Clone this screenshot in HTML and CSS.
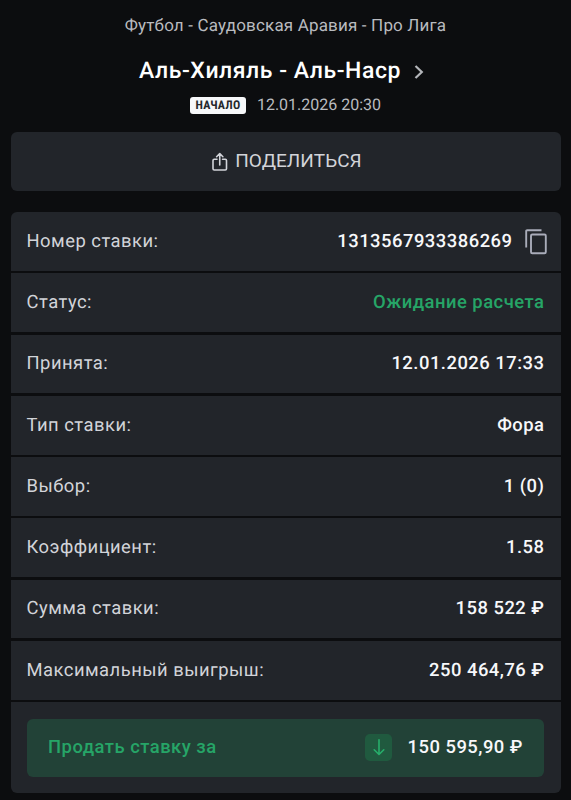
FILE: index.html
```html
<!DOCTYPE html>
<html lang="ru">
<head>
<meta charset="utf-8">
<title>Ставка</title>
<link rel="stylesheet" href="styles.css">
</head>
<body>
<header class="header">
  <div class="league">Футбол - Саудовская Аравия - Про Лига</div>
  <div class="match">
    <span class="match-name">Аль-Хиляль - Аль-Наср</span>
    <svg class="chevron" width="10" height="16" viewBox="0 0 10 16"><path d="M1.5 2 L7.8 8 L1.5 14"/></svg>
  </div>
  <div class="start"><span class="badge">НАЧАЛО</span><span class="date">12.01.2026 20:30</span></div>
</header>
<button class="share">
  <svg class="share-icon" width="16" height="20" viewBox="0 0 16 20"><path d="M5 7.3H2.2Q1 7.3 1 8.5V16.8Q1 18 2.2 18H13.3Q14.5 18 14.5 16.8V8.500Q14.500 7.300 13.300 7.300H10.500M7.750 13V1.800M4.600 4.700L7.750 1.500L10.900 4.700"/></svg>
  <span class="share-text">ПОДЕЛИТЬСЯ</span>
</button>
<main class="card">
  <div class="row"><span class="label">Номер ставки:</span><span class="value">1313567933386269</span><svg class="copy" width="22" height="26" viewBox="0 0 22 26"><path d="M1.200 18.500V2.200Q1.200 1.200 2.200 1.200H16.500"/><rect x="6" y="5.500" width="14.800" height="18.800" rx="1.300"/></svg></div>
  <div class="row"><span class="label">Статус:</span><span class="value pending">Ожидание расчета</span></div>
  <div class="row"><span class="label">Принята:</span><span class="value">12.01.2026 17:33</span></div>
  <div class="row"><span class="label">Тип ставки:</span><span class="value">Фора</span></div>
  <div class="row"><span class="label">Выбор:</span><span class="value">1 (0)</span></div>
  <div class="row"><span class="label">Коэффициент:</span><span class="value">1.58</span></div>
  <div class="row"><span class="label">Сумма ставки:</span><span class="value">158 522 ₽</span></div>
  <div class="row"><span class="label">Максимальный выигрыш:</span><span class="value">250 464,76 ₽</span></div>
  <div class="sell-wrap">
    <button class="sell">
      <span class="sell-label">Продать ставку за</span>
      <span class="trend"><svg width="12" height="17" viewBox="0 0 12 17"><path d="M6 .8V15.200M1.200 10.800L6 15.500L10.800 10.800"/></svg></span>
      <span class="value">150 595,90 ₽</span>
    </button>
  </div>
</main>
</body>
</html>
```

FILE: styles.css
```css
* { box-sizing: border-box; }
body {
  margin: 0;
  height: 800px;
  overflow: hidden;
  padding: 0 10.500px;
  background: #0c0d0f;
  font-family: Roboto, "Liberation Sans", sans-serif;
  text-rendering: geometricPrecision;
  color: #d2d4d9;
}
svg { fill: none; flex: none; stroke-linecap: round; stroke-linejoin: round; }
button { border: 0; font: inherit; color: inherit; width: 100%; display: flex; align-items: center; }
.header { height: 132px; padding-top: 14px; display: flex; flex-direction: column; align-items: center; }
.league { font-size: 17px; line-height: 24px; letter-spacing: .17px; color: #b9bbbf; }
.match { display: flex; align-items: center; gap: 13px; margin: 17px 8px 0 0; height: 32px; }
.match-name { font-size: 23px; line-height: 32px; font-weight: 500; letter-spacing: .54px; color: #fff; }
.chevron { stroke: #b4b6ba; stroke-width: 2.200; margin-top: 2px; stroke-linecap: butt; stroke-linejoin: miter; }
.start { display: flex; align-items: center; gap: 11px; height: 20px; margin-top: 8px; }
.badge {
  width: 56px; height: 17px; border-radius: 3px; background: #f7f8fa; color: #24272c;
  font-size: 12px; line-height: 17px; font-weight: 700; text-align: center; letter-spacing: .2px;
  font-family: "Roboto Condensed", Roboto, sans-serif; font-stretch: 75%;
}
.date { font-size: 16px; line-height: 20px; color: #b9bbbf; }
.share { height: 58.500px; border-radius: 6px; background: #22252a; justify-content: center; gap: 7px; padding: 0 0 0 3px; }
.share-icon { stroke: #d2d4d9; stroke-width: 1.600; margin-top: 2px; }
.share-text { font-size: 19px; line-height: 24px; letter-spacing: .05px; }
.card { margin-top: 21.500px; border-radius: 6px; overflow: hidden; display: flex; flex-direction: column; gap: 2.600px; }
.row { height: 58.700px; padding: 1.700px 16px 0; background: #22252a; display: flex; align-items: center; }
.label { font-size: 18.400px; letter-spacing: .48px; flex: 1; line-height: 22px; margin-bottom: 1px; }
.value { font-size: 18.400px; font-weight: 500; letter-spacing: .5px; color: #f7f8fa; white-space: nowrap; line-height: 22px; margin-bottom: 1px; }
.pending { color: #26a567; }
.copy { stroke: #a9acb9; stroke-width: 1.900; margin: 0 -2px 0 12px; stroke-linecap: butt; }
.sell-wrap { height: 91px; padding: 16.500px 16.500px; background: #22252a; }
.sell { height: 58px; padding: 0 21px; border-radius: 6px; background: #224237; text-align: left; }
.sell-label { flex: 1; font-size: 18.400px; font-weight: 500; letter-spacing: .5px; color: #26a567; line-height: 22px; margin-bottom: 1px; }
.trend { width: 27px; height: 27px; border-radius: 5px; background: #205a3f; display: flex; align-items: center; justify-content: center; margin-right: 15.500px; }
.trend svg { stroke: #27ae6b; stroke-width: 1.600; }
```
